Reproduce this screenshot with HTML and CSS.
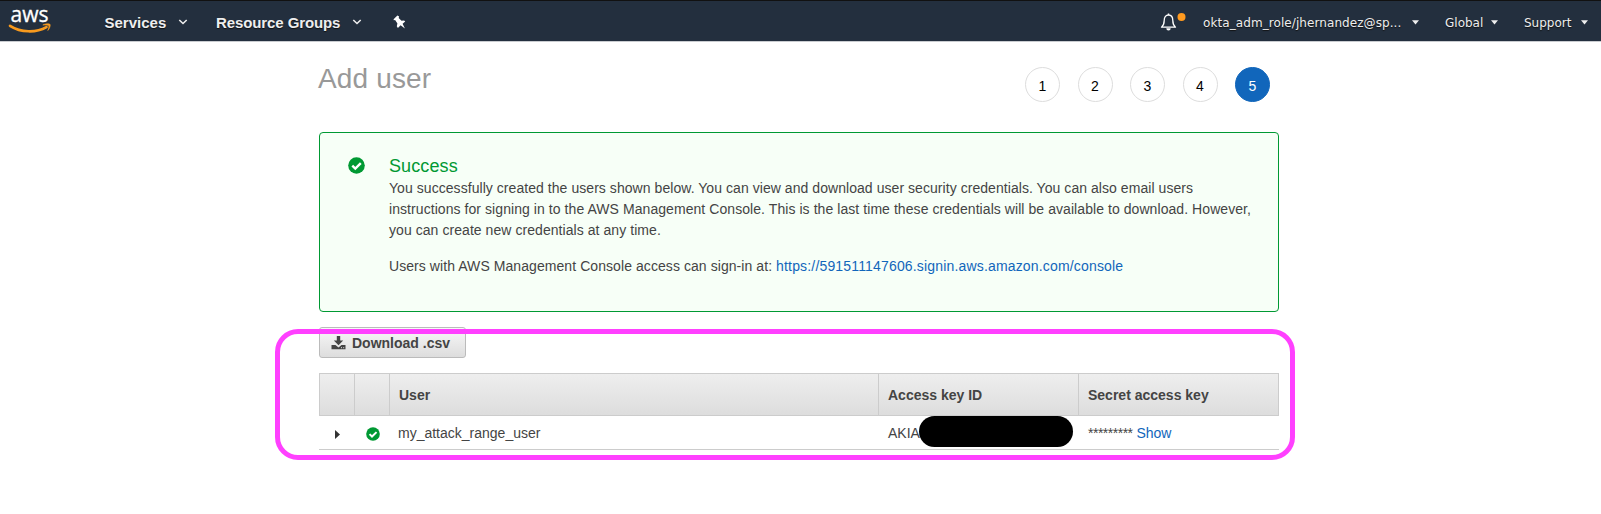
FILE: index.html
```html
<!DOCTYPE html>
<html lang="en">
<head>
<meta charset="utf-8">
<title>Add user</title>
<link rel="stylesheet" href="styles.css">
</head>
<body>
<header class="nav">
  <svg class="logo" width="43" height="28" viewBox="0 0 43 28">
    <text class="logo-text" x="1.5" y="13.5" textLength="38" lengthAdjust="spacingAndGlyphs">aws</text>
    <path d="M1 17.800c11 7 26 7.300 36.500 1.300" fill="none" stroke="#f79a1e" stroke-width="2.600" stroke-linecap="round"/>
    <path d="M33.800 17c2-1.300 6.700-1.600 7.300-.6.500 1-.6 4.600-2.300 6.100.9-2.200 1.400-4 .9-4.700-.6-.8-3.700-.8-5.900-.8z" fill="#f79a1e" stroke="#f79a1e" stroke-width=".6"/>
  </svg>
  <div class="main-menu">
    <span class="item services">Services</span>
    <svg class="chev" width="10" height="8" viewBox="0 0 10 8"><path d="M1.300 2l3.700 3.500L8.700 2"/></svg>
    <span class="item groups">Resource Groups</span>
    <svg class="chev" width="10" height="8" viewBox="0 0 10 8"><path d="M1.300 2l3.700 3.500L8.700 2"/></svg>
    <svg class="pin" width="13" height="15" viewBox="0 0 13 15"><path d="M.6 4.300L4.400.5l1.700 1-.4 1.500 2.800 2.700 2.600-.3 1.100 1.200-2.600 2.200 2.300 4.700-4.300-3.300-2.700 2.700-1.100-1.700.6-2.600-2.300-3.700-1.300.3z" fill="#fff"/></svg>
  </div>
  <div class="account-menu">
    <svg class="bell" width="28" height="20" viewBox="0 0 28 20"><path d="M1.500 14.200c2.300-1.800 2.700-3.400 2.700-6.600 0-3.400 1.800-5.600 4.300-5.600s4.300 2.200 4.300 5.600c0 3.200.4 4.800 2.700 6.600z" fill="none" stroke="#fff" stroke-width="1.300" stroke-linejoin="round"/><path d="M8.500 2V.5" stroke="#fff" stroke-width="1.500"/><path d="M6.300 15.300h4.400a2.200 2.200 0 0 1-4.400 0z" fill="#fff"/><circle cx="21.500" cy="4" r="4" fill="#ff9a1f"/></svg>
    <span class="item role">okta_adm_role/jhernandez@sp...</span>
    <svg class="caret" width="7" height="5" viewBox="0 0 7 5"><path d="M0 .3h7L3.500 4.500z"/></svg>
    <span class="item global">Global</span>
    <svg class="caret" width="7" height="5" viewBox="0 0 7 5"><path d="M0 .3h7L3.500 4.500z"/></svg>
    <span class="item support">Support</span>
    <svg class="caret" width="7" height="5" viewBox="0 0 7 5"><path d="M0 .3h7L3.500 4.500z"/></svg>
  </div>
</header>
<main class="content">
  <div class="heading">
    <h1 class="title">Add user</h1>
    <div class="steps">
      <span class="step">1</span><span class="step">2</span><span class="step">3</span><span class="step">4</span><span class="step active">5</span>
    </div>
  </div>
  <section class="alert">
    <svg class="alert-icon" width="17" height="17" viewBox="0 0 17 17"><circle cx="8.500" cy="8.500" r="8.300" fill="#093"/><path d="M4.300 8.600l3 3L12.800 6.200" fill="none" stroke="#fff" stroke-width="2.400"/></svg>
    <div class="alert-body">
      <h2 class="alert-title">Success</h2>
      <p class="para"><span class="line l1">You successfully created the users shown below. You can view and download user security credentials. You can also email users</span>
      <span class="line l2">instructions for signing in to the AWS Management Console. This is the last time these credentials will be available to download. However,</span>
      <span class="line l3">you can create new credentials at any time.</span></p>
      <p class="para signin"><span class="line l4">Users with AWS Management Console access can sign-in at: <a class="link url">https://591511147606.signin.aws.amazon.com/console</a></span></p>
    </div>
  </section>
  <section class="results">
    <button class="download">
      <svg width="15" height="14" viewBox="0 0 15 14"><path d="M5.800 0h3.400v4.500h3L7.500 9.200 2.800 4.500h3z" fill="#444"/><path d="M.5 9h4l3 2.500 3-2.500h4v4.300H.5z" fill="#444"/><path d="M10 11.700h1M12.200 11.700h1" stroke="#ddd"/></svg>
      <span class="download-label">Download .csv</span>
    </button>
    <div class="table">
      <div class="row head"><span class="cell"></span><span class="cell"></span><span class="cell">User</span><span class="cell">Access key ID</span><span class="cell">Secret access key</span></div>
      <div class="row data">
        <span class="cell center"><svg width="5" height="9" viewBox="0 0 5 9"><path d="M0 0l5 4.500L0 9z" fill="#333"/></svg></span>
        <span class="cell center"><svg width="14" height="14" viewBox="0 0 17 17"><circle cx="8.500" cy="8.500" r="8.300" fill="#093"/><path d="M4.300 8.600l3 3L12.800 6.200" fill="none" stroke="#fff" stroke-width="2.400"/></svg></span>
        <span class="cell user">my_attack_range_user</span>
        <span class="cell key">AKIA<span class="redaction"></span></span>
        <span class="cell secret"><span class="mask">*********</span> <a class="link">Show</a></span>
      </div>
    </div>
    <div class="highlight"></div>
  </section>
</main>
</body>
</html>
```

FILE: styles.css
```css
* { box-sizing: border-box; }
body { margin: 0; min-height: 100vh; background: #fff; color: #444; font: 14px/21px "Liberation Sans", Arial, sans-serif; }
svg { display: block; flex: none; }
.nav { display: flex; align-items: flex-start; height: 42px; background: #232f3e; border-top: 1px solid #111; border-bottom: 1px solid #c9ccd0; color: #eee; }
.logo { margin: 7px 0 0 9px; overflow: visible; }
.logo-text { font: 22px/22px "Open Sans", sans-serif; fill: #fff; stroke: #fff; stroke-width: .3px; }
.item { display: block; white-space: nowrap; text-shadow: 0 1px 1px #111; }
.main-menu { display: flex; align-items: center; height: 42px; margin-left: 52.5px; font-size: 15px; font-weight: bold; }
.services { width: 73px; }
.groups { width: 136px; margin-left: 28.5px; letter-spacing: -.1px; }
.chev path { fill: none; stroke: #eee; stroke-width: 1.6; }
.pin { margin-left: 31px; }
.account-menu { display: flex; align-items: center; height: 43px; margin-left: auto; padding-right: 13px; font: 12px/20px "DejaVu Sans", Verdana, sans-serif; }
.bell { margin-right: 15px; }
.role { width: 209px; letter-spacing: .08px; }
.global { width: 46px; margin-left: 26px; }
.support { width: 57px; margin-left: 26px; }
.caret path { fill: #eee; }
.content { width: 960px; margin-left: 319px; }
.heading { display: flex; justify-content: space-between; height: 90px; padding: 21px 9px 0 0; }
.title { margin: 0 0 0 -1px; color: #999; font-size: 28px; font-weight: normal; line-height: 32px; letter-spacing: .15px; }
.steps { display: flex; gap: 17.5px; padding-top: 4px; }
.step { display: block; width: 35px; height: 35px; padding-top: 1px; border: 1px solid #ddd; border-radius: 50%; color: #000; line-height: 35px; text-align: center; }
.active { border-color: #1166bb; background: #1166bb; color: #fff; }
.alert { display: flex; height: 180px; padding: 22px 0 0 28px; border: 1px solid #093; border-radius: 4px; background: #f7fff7; }
.alert-icon { margin-top: 1.5px; }
.alert-body { margin-left: 24px; }
.alert-title { margin: 0; color: #093; font-size: 18px; font-weight: normal; line-height: 22px; letter-spacing: .1px; }
.para { margin: 1px 0 0; }
.signin { margin-top: 15px; }
.line { display: block; width: max-content; white-space: nowrap; }
.l1 { letter-spacing: .055px; }
.l2 { letter-spacing: .066px; }
.l3 { letter-spacing: .06px; }
.l4 { letter-spacing: .07px; }
.link { color: #1166bb; }
.url { letter-spacing: .167px; }
.results { position: relative; padding-top: 15px; }
.download { display: flex; align-items: center; gap: 6px; width: 147px; height: 31px; margin: 0 0 15px; padding: 0 0 0 11px; border: 1px solid #bbb; border-radius: 3px; background: linear-gradient(#f8f8f8, #ddd); color: #444; font: bold 14px "Liberation Sans", Arial, sans-serif; }
.row { display: grid; grid-template-columns: 35px 35px 489px 200px 201px; }
.head { grid-template-columns: 34px 35px 489px 200px 200px; height: 43px; border: 1px solid #ccc; background: linear-gradient(#eee, #ddd); font-weight: bold; line-height: 42px; }
.head .cell { height: 41px; padding-left: 9px; border-left: 1px solid #ccc; white-space: nowrap; }
.head .cell:first-child { border-left: 0; }
.data { height: 34px; border-bottom: 1px solid #ccc; line-height: 35px; }
.center { display: flex; align-items: center; justify-content: center; padding: 1px 0 0 2px; }
.user { padding-left: 9px; }
.key, .secret { position: relative; padding-left: 10px; white-space: nowrap; }
.mask { letter-spacing: -.5px; }
.redaction { position: absolute; left: 40.5px; top: 0; width: 154px; height: 31px; border-radius: 16px; background: #000; }
.highlight { position: absolute; left: -44.500px; top: 17px; width: 1020px; height: 131px; border: 5px solid #ff40ff; border-radius: 23px; }
```
